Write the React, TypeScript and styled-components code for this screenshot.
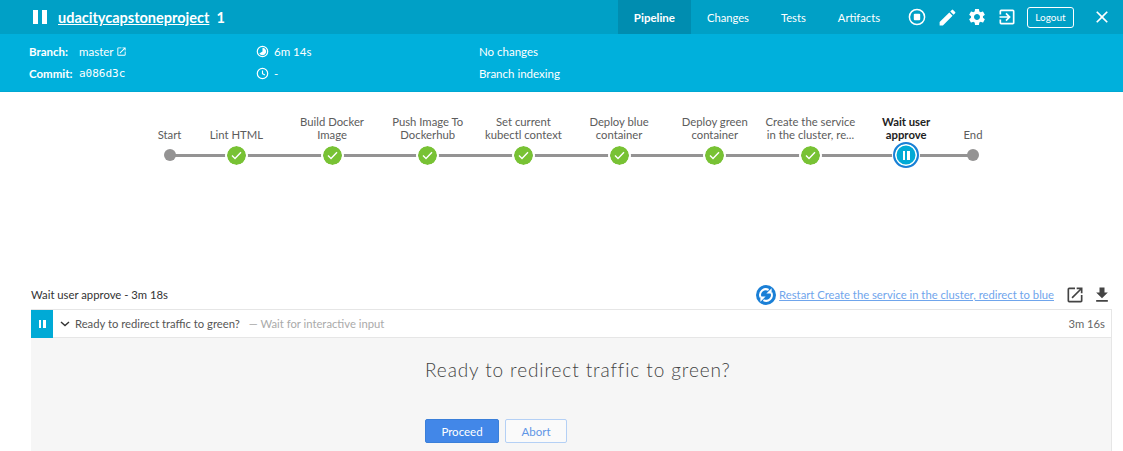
import React from 'react';
import styled, { createGlobalStyle } from 'styled-components';
import { MdClose, MdEdit, MdExitToApp, MdFileDownload, MdOpenInNew, MdSettings } from 'react-icons/md';

const GlobalStyle = createGlobalStyle`
  html, body {
    margin: 0;
    padding: 0;
    background: #fff;
    overflow: hidden;
  }
  body {
    font-family: Lato, "Open Sans", sans-serif;
    font-size: 12px;
    color: #4a4a4a;
  }
  * { box-sizing: border-box; }
`;

const Page = styled.div`
  width: 1123px;
  height: 451px;
  overflow: hidden;
  display: flex;
  flex-direction: column;
`;

const TopBar = styled.header`
  height: 34px;
  background: #00a0c6;
  color: #fff;
  display: flex;
  align-items: center;
  padding: 0 11px 0 33px;
`;

const PauseGlyph = styled.div<{ $w: number; $h: number; $gap: number }>`
  display: flex;
  gap: ${p => p.$gap}px;
  flex: none;

  &::before, &::after {
    content: '';
    width: ${p => p.$w}px;
    height: ${p => p.$h}px;
    background: #fff;
  }
`;

const ProjectLink = styled.a`
  margin-left: 11px;
  font-size: 14.5px;
  font-weight: 700;
  color: #fff;
  text-decoration: underline;
`;

const RunNumber = styled.span`
  margin-left: 7px;
  font-size: 14.5px;
  font-weight: 700;
`;

const Tabs = styled.nav`
  margin-left: auto;
  display: flex;
  height: 100%;
`;

const Tab = styled.a<{ $active?: boolean }>`
  display: flex;
  align-items: center;
  padding: 0 16px;
  font-size: ${p => (p.$active ? 11.5 : 11.2)}px;
  font-weight: ${p => (p.$active ? 700 : 400)};
  color: #fff;
  background: ${p => (p.$active ? '#008db0' : 'transparent')};
`;

const Actions = styled.div`
  display: flex;
  align-items: center;
  margin-left: 6px;
`;

const IconSlot = styled.span`
  width: 30px;
  display: flex;
  justify-content: center;
  svg { display: block; flex: none; }
`;

const LogoutButton = styled.button`
  width: 47px;
  height: 21px;
  margin: 0 18px 0 5px;
  padding: 0;
  border: 1px solid #fff;
  border-radius: 3px;
  background: transparent;
  color: #fff;
  font: 400 10px Lato, sans-serif;
`;

const CloseButton = styled.span`
  width: 20px;
  display: flex;
  svg { display: block; flex: none; }
`;

const Details = styled.section`
  height: 58px;
  background: #00b0dc;
  color: #fff;
  border-bottom: 1px solid #00a8d2;
  padding: 6px 0 0 29px;
  display: grid;
  grid-template-columns: 227px 223px 1fr;
  grid-template-rows: 22px 22px;
  font-size: 11.5px;
  align-items: center;
`;

const Cell = styled.div`
  display: flex;
  align-items: center;
  white-space: nowrap;
  svg { display: block; flex: none; }
`;

const Key = styled.span`
  width: 50px;
  font-weight: 700;
`;

const Sha = styled.span`
  font-family: "DejaVu Sans Mono", monospace;
  font-size: 11px;
`;

const StatIcon = styled.span`
  width: 18px;
  display: inline-flex;
`;

const ExternalMark = styled.span`
  margin-left: 2px;
  display: flex;
`;

const Graph = styled.section`
  height: 188px;
  padding: 23px 0 0 150.5px;
  display: flex;
  align-items: flex-start;
`;

const Step = styled.div<{ $width: number }>`
  width: ${p => p.$width}px;
  flex: none;
  display: flex;
  flex-direction: column;
  align-items: center;
  position: relative;
`;

const StepLabel = styled.div<{ $current?: boolean }>`
  height: 26px;
  width: ${p => (p.$current ? 70 : 90)}px;
  flex: none;
  display: flex;
  align-items: flex-end;
  justify-content: center;
  text-align: center;
  font-size: 11.3px;
  line-height: 13px;
  color: ${p => (p.$current ? '#222' : '#5c5c5c')};
  font-weight: ${p => (p.$current ? 700 : 400)};
`;

const Marker = styled.div<{ $first?: boolean; $last?: boolean }>`
  position: relative;
  width: 100%;
  height: 26px;
  margin-top: 1px;
  display: flex;
  align-items: center;
  justify-content: center;

  &::before {
    content: '';
    position: absolute;
    left: ${p => (p.$first ? '50%' : '0')};
    right: ${p => (p.$last ? '50%' : '0')};
    top: 50%;
    height: 3px;
    margin-top: -1.5px;
    background: #949393;
  }
`;

const GreyDot = styled.span`
  position: relative;
  width: 12px;
  height: 12px;
  border-radius: 50%;
  background: #949393;
`;

const OkDot = styled.span`
  position: relative;
  width: 23px;
  height: 23px;
  border: 2px solid #fff;
  border-radius: 50%;
  background: #78c234;
  background-clip: padding-box;
  display: flex;
  align-items: center;
  justify-content: center;
`;

const PausedDot = styled.span`
  position: relative;
  width: 26px;
  height: 26px;
  border-radius: 50%;
  background: #00aad6;
  border: 2px solid #1a7fd6;
  box-shadow: inset 0 0 0 1.5px #fff, 0 0 0 1px #fff;
  display: flex;
  align-items: center;
  justify-content: center;
`;

const LogHead = styled.div`
  height: 29px;
  margin: 0 11px 0 31px;
  display: flex;
  align-items: center;
  font-size: 11.3px;
  color: #333;
`;

const RestartLink = styled.a`
  margin-left: auto;
  display: flex;
  align-items: center;
  gap: 3px;
  font-size: 11.25px;
  color: #6fa5ec;
  text-decoration: underline;
  svg { display: block; flex: none; }
`;

const LogTools = styled.div`
  display: flex;
  align-items: center;
  gap: 7px;
  margin-left: 11px;
  color: #444;
  svg { display: block; flex: none; }
`;

const LogPanel = styled.section`
  margin: 0 11px 0 31px;
  flex: 1;
  display: flex;
  flex-direction: column;
  border: 1px solid #e6e6e6;
  border-left: 0;
  border-bottom: 0;
  background: #f6f6f6;
`;

const LogRow = styled.div`
  height: 28px;
  background: #fff;
  display: flex;
  align-items: center;
  border-bottom: 1px solid #e6e6e6;
  font-size: 11.25px;
`;

const LogStatus = styled.div`
  width: 22px;
  height: 28px;
  background: #00aad6;
  display: flex;
  align-items: center;
  justify-content: center;
`;

const Chevron = styled.svg`
  margin-left: 7px;
  flex: none;
`;

const RowTitle = styled.span`
  margin: 0 0 1px 5px;
  color: #555;
`;

const RowHint = styled.span`
  margin: 0 0 1px 9px;
  color: #aaa;
`;

const RowTime = styled.span`
  margin: 0 6px 1px auto;
  color: #666;
`;

const Prompt = styled.div`
  padding: 20px 0 0 394px;
  display: flex;
  flex-direction: column;
  align-items: flex-start;
`;

const Question = styled.h2`
  margin: 0;
  font-size: 19px;
  line-height: 24px;
  font-weight: 300;
  letter-spacing: 0.9px;
  color: #444;
  white-space: nowrap;
`;

const ButtonRow = styled.div`
  display: flex;
  gap: 6px;
  margin-top: 37px;
`;

const ActionButton = styled.button<{ $primary?: boolean }>`
  height: 24px;
  width: ${p => (p.$primary ? 74 : 62)}px;
  padding: 0;
  border-radius: 2px;
  border: 1px solid ${p => (p.$primary ? '#3a7fd9' : '#b4d0f5')};
  background: ${p => (p.$primary ? '#4287e8' : '#fafafa')};
  color: ${p => (p.$primary ? '#fff' : '#5f96e6')};
  font: 400 11.5px Lato, sans-serif;
`;

const steps = [
  'Lint HTML',
  'Build Docker Image',
  'Push Image To Dockerhub',
  'Set current kubectl context',
  'Deploy blue container',
  'Deploy green container',
  'Create the service in the cluster, re...',
];

const Check = () => (
  <svg width="11" height="9" viewBox="0 0 11 9" fill="none">
    <path d="M1 4.6 4 7.5 10 1.2" stroke="#fff" strokeWidth="1.4" />
  </svg>
);

const StopCircle = () => (
  <svg width="18" height="18" viewBox="0 0 18 18" fill="none">
    <circle cx="9" cy="9" r="7.6" stroke="#fff" strokeWidth="1.5" />
    <rect x="5.8" y="5.8" width="6.4" height="6.4" rx="1" fill="#fff" />
  </svg>
);

const PieClock = () => (
  <svg width="13" height="13" viewBox="0 0 13 13" fill="none">
    <circle cx="6.5" cy="6.5" r="5.2" stroke="#fff" strokeWidth="1.2" />
    <path d="M6.5 2.8a3.7 3.7 0 1 1-3.2 5.6L6.5 6.5z" fill="#fff" />
  </svg>
);

const Clock = () => (
  <svg width="13" height="13" viewBox="0 0 13 13" fill="none">
    <circle cx="6.5" cy="6.5" r="5.2" stroke="#fff" strokeWidth="1.2" />
    <path d="M6.5 3.4v3.3l2.4 1.4" stroke="#fff" strokeWidth="1.1" />
  </svg>
);

const RestartIcon = () => (
  <svg width="20" height="20" viewBox="0 0 20 20" fill="none">
    <circle cx="10" cy="10" r="10" fill="#1a7fd6" />
    <path d="M4.6 12.4A5.8 5.8 0 0 1 12.6 4.9" stroke="#fff" strokeWidth="2" />
    <path d="M10.4 8.4h5.2V3.2z" fill="#fff" />
    <path d="M15.4 7.6A5.8 5.8 0 0 1 7.4 15.1" stroke="#fff" strokeWidth="2" />
    <path d="M9.6 11.6H4.4v5.2z" fill="#fff" />
  </svg>
);

export default function App() {
  return (
    <Page>
      <GlobalStyle />
      <TopBar>
        <PauseGlyph $w={5} $h={14} $gap={4} />
        <ProjectLink>udacitycapstoneproject</ProjectLink>
        <RunNumber>1</RunNumber>
        <Tabs>
          <Tab $active>Pipeline</Tab>
          <Tab>Changes</Tab>
          <Tab>Tests</Tab>
          <Tab>Artifacts</Tab>
        </Tabs>
        <Actions>
          <IconSlot><StopCircle /></IconSlot>
          <IconSlot><MdEdit size={21} color="#fff" /></IconSlot>
          <IconSlot><MdSettings size={20} color="#fff" /></IconSlot>
          <IconSlot><MdExitToApp size={20} color="#fff" /></IconSlot>
          <LogoutButton>Logout</LogoutButton>
          <CloseButton><MdClose size={20} color="#fff" /></CloseButton>
        </Actions>
      </TopBar>

      <Details>
        <Cell>
          <Key>Branch:</Key>
          <span>master</span>
          <ExternalMark><MdOpenInNew size={11} /></ExternalMark>
        </Cell>
        <Cell>
          <StatIcon><PieClock /></StatIcon>
          <span>6m 14s</span>
        </Cell>
        <Cell>No changes</Cell>
        <Cell>
          <Key>Commit:</Key>
          <Sha>a086d3c</Sha>
        </Cell>
        <Cell>
          <StatIcon><Clock /></StatIcon>
          <span>-</span>
        </Cell>
        <Cell>Branch indexing</Cell>
      </Details>

      <Graph>
        <Step $width={38}>
          <StepLabel>Start</StepLabel>
          <Marker $first><GreyDot /></Marker>
        </Step>
        {steps.map(name => (
          <Step $width={95.7} key={name}>
            <StepLabel>{name}</StepLabel>
            <Marker><OkDot><Check /></OkDot></Marker>
          </Step>
        ))}
        <Step $width={95.7}>
          <StepLabel $current>Wait user approve</StepLabel>
          <Marker>
            <PausedDot><PauseGlyph $w={2.5} $h={9} $gap={2} /></PausedDot>
          </Marker>
        </Step>
        <Step $width={38}>
          <StepLabel>End</StepLabel>
          <Marker $last><GreyDot /></Marker>
        </Step>
      </Graph>

      <LogHead>
        <span>Wait user approve - 3m 18s</span>
        <RestartLink>
          <RestartIcon />
          <span>Restart Create the service in the cluster, redirect to blue</span>
        </RestartLink>
        <LogTools>
          <MdOpenInNew size={20} />
          <MdFileDownload size={20} />
        </LogTools>
      </LogHead>

      <LogPanel>
        <LogRow>
          <LogStatus><PauseGlyph $w={2.5} $h={8} $gap={2} /></LogStatus>
          <Chevron width="10" height="6" viewBox="0 0 10 6" fill="none">
            <path d="M1 1l4 3.6L9 1" stroke="#333" strokeWidth="1.4" />
          </Chevron>
          <RowTitle>Ready to redirect traffic to green?</RowTitle>
          <RowHint>— Wait for interactive input</RowHint>
          <RowTime>3m 16s</RowTime>
        </LogRow>
        <Prompt>
          <Question>Ready to redirect traffic to green?</Question>
          <ButtonRow>
            <ActionButton $primary>Proceed</ActionButton>
            <ActionButton>Abort</ActionButton>
          </ButtonRow>
        </Prompt>
      </LogPanel>
    </Page>
  );
}
